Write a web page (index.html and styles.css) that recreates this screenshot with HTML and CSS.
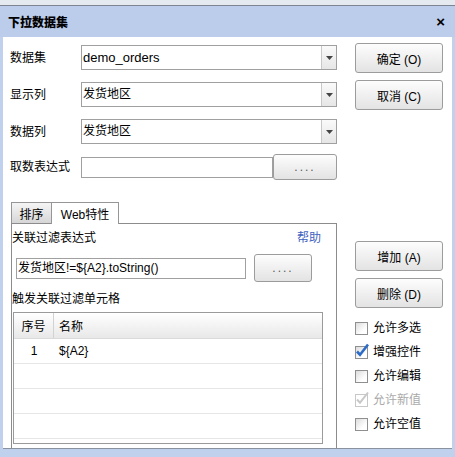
FILE: index.html
```html
<!DOCTYPE HTML>
<html lang="zh-CN">
<head>
    <meta http-equiv="content-type" content="text/html; charset=utf-8">
    <title>下拉数据集</title>
    <link rel="stylesheet" href="styles.css">
</head>
<body>
    <div class="top-strip"></div>
    <div class="titlebar">
        <span class="titlebar__text">下拉数据集</span>
        <span class="titlebar__close">×</span>
    </div>
    <div class="content">
        <div class="main">
            <div class="form">
                <div class="row">
                    <span class="row__label">数据集</span>
                    <div class="combo">
                        <span class="combo__value combo__value--latin">demo_orders</span>
                        <span class="combo__arrow"><svg width="7" height="4" viewBox="0 0 7 4"><path d="M0 0h7L3.5 4z" fill="#444"/></svg></span>
                    </div>
                </div>
                <div class="row">
                    <span class="row__label">显示列</span>
                    <div class="combo">
                        <span class="combo__value">发货地区</span>
                        <span class="combo__arrow"><svg width="7" height="4" viewBox="0 0 7 4"><path d="M0 0h7L3.5 4z" fill="#444"/></svg></span>
                    </div>
                </div>
                <div class="row row--last-combo">
                    <span class="row__label">数据列</span>
                    <div class="combo">
                        <span class="combo__value">发货地区</span>
                        <span class="combo__arrow"><svg width="7" height="4" viewBox="0 0 7 4"><path d="M0 0h7L3.5 4z" fill="#444"/></svg></span>
                    </div>
                </div>
                <div class="row row--expr">
                    <span class="row__label">取数表达式</span>
                    <div class="text-input text-input--expr"></div>
                    <button class="btn btn--dots">....</button>
                </div>
            </div>
            <div class="actions">
                <button class="btn">确定 (O)</button>
                <button class="btn">取消 (C)</button>
            </div>
        </div>

        <div class="lower">
            <div class="tabs-area">
                <div class="tabs">
                    <span class="tab">排序</span>
                    <span class="tab tab--active">Web特性</span>
                </div>
                <div class="panel">
                    <div class="panel__head">
                        <span>关联过滤表达式</span>
                        <span class="link">帮助</span>
                    </div>
                    <div class="filter-row">
                        <div class="text-input text-input--filter">发货地区!=${A2}.toString()</div>
                        <button class="btn btn--dots btn--filter">....</button>
                    </div>
                    <div class="panel__label">触发关联过滤单元格</div>
                    <div class="cells">
                        <div class="cells__head">
                            <span class="cells__no">序号</span>
                            <span class="cells__name">名称</span>
                        </div>
                        <div class="cells__row">
                            <span class="cells__no">1</span>
                            <span class="cells__name">${A2}</span>
                        </div>
                        <div class="cells__row"></div>
                        <div class="cells__row"></div>
                        <div class="cells__row"></div>
                    </div>
                </div>
            </div>

            <div class="side">
                <button class="btn">增加 (A)</button>
                <button class="btn">删除 (D)</button>
                <div class="checks">
                    <div class="check">
                        <span class="check__box"></span>
                        <span>允许多选</span>
                    </div>
                    <div class="check">
                        <span class="check__box"><svg width="16" height="16" viewBox="0 0 16 16"><path d="M3 8.5l3 3.2L14 1.5" fill="none" stroke="#2c6cc6" stroke-width="2.6"/></svg></span>
                        <span>增强控件</span>
                    </div>
                    <div class="check">
                        <span class="check__box"></span>
                        <span>允许编辑</span>
                    </div>
                    <div class="check check--disabled">
                        <span class="check__box"><svg width="16" height="16" viewBox="0 0 16 16"><path d="M3 8.5l3 3.2L14 1.5" fill="none" stroke="#c8c8c8" stroke-width="2"/></svg></span>
                        <span>允许新值</span>
                    </div>
                    <div class="check">
                        <span class="check__box"></span>
                        <span>允许空值</span>
                    </div>
                </div>
            </div>
        </div>
    </div>
</body>
</html>
```

FILE: styles.css
```css
/* Colours */
:root {
    --frame-blue: rgb(192, 209, 238);
    --title-blue: rgb(188, 205, 236);
    --strip: rgb(229, 233, 240);
    --border: rgb(160, 160, 160);
    --panel-border: rgb(140, 140, 140);
    --row-line: rgb(230, 230, 230);
    --link: rgb(64, 99, 192);
    --disabled: rgb(170, 170, 170);
}

* {
    box-sizing: border-box;
}

html, body {
    margin: 0;
    padding: 0;
}

body {
    width: 455px;
    height: 457px;
    overflow: hidden;
    background-color: var(--frame-blue);
    font-family: "Liberation Sans", "Noto Sans CJK SC", sans-serif;
    font-size: 12px;
    color: #000;
}

.top-strip {
    height: 6px;
    background-color: var(--strip);
    border-bottom: 1px solid rgb(125, 133, 146);
}

.titlebar {
    height: 31px;
    display: flex;
    align-items: center;
    justify-content: space-between;
    padding: 0 10px 0 8px;
    background-color: var(--title-blue);
}

.titlebar__text {
    font-weight: 900;
}

.titlebar__close {
    font-weight: bold;
    font-size: 15px;
}

.content {
    margin: 0 3px;
    height: 412px;
    background-color: #fff;
    border-bottom: 1px solid rgb(138, 146, 160);
}

/* Upper form */
.main {
    display: flex;
    height: 165px;
}

.form {
    width: 334px;
    padding: 8px 0 0 7px;
}

.row {
    display: flex;
    align-items: center;
    height: 25px;
    margin-bottom: 12px;
}

.row--last-combo {
    margin-bottom: 10px;
}

.row--expr {
    height: 26px;
}

.row__label {
    width: 71px;
    line-height: 16px;
}

.combo {
    display: flex;
    width: 256px;
    height: 25px;
    border: 1px solid var(--border);
}

.combo__value {
    flex: 1;
    padding-left: 1px;
    line-height: 23px;
}

.combo__value--latin {
    font-size: 13px;
}

.combo__arrow {
    width: 15px;
    display: flex;
    align-items: center;
    justify-content: center;
    border-left: 1px solid rgb(200, 200, 200);
    background: linear-gradient(rgb(250, 250, 250), rgb(230, 230, 230));
}

.text-input {
    height: 21px;
    border: 1px solid var(--border);
    background-color: #fff;
    line-height: 19px;
    white-space: nowrap;
}

.text-input--expr {
    width: 192px;
}

.btn {
    height: 30px;
    padding: 0;
    border: 1px solid rgb(156, 156, 156);
    border-radius: 3px;
    background: linear-gradient(rgb(253, 253, 253), rgb(227, 227, 227));
    font-family: inherit;
    font-size: 12px;
    color: #000;
}

.btn--dots {
    width: 64px;
    height: 26px;
    color: rgb(90, 90, 90);
    letter-spacing: 2px;
}

.actions {
    width: 88px;
    margin: 6px 0 0 18px;
    display: flex;
    flex-direction: column;
    gap: 7px;
}

/* Tabs */
.lower {
    display: flex;
    height: 246px;
}

.tabs-area {
    width: 326px;
    margin-left: 8px;
    display: flex;
    flex-direction: column;
}

.tabs {
    display: flex;
    align-items: flex-start;
    height: 21px;
}

.tab {
    height: 21px;
    width: 41px;
    display: flex;
    align-items: center;
    justify-content: center;
    border: 1px solid rgb(150, 150, 150);
    border-bottom: none;
    background: linear-gradient(rgb(245, 245, 245), rgb(214, 214, 214));
}

.tab--active {
    width: 68px;
    height: 22px;
    margin-left: -1px;
    background: #fff;
    position: relative;
    z-index: 1;
    padding-bottom: 1px;
}

.panel {
    flex: 1;
    border: 1px solid var(--panel-border);
    border-bottom: none;
    padding-right: 15px;
}

.panel__head {
    display: flex;
    justify-content: space-between;
    margin-top: 6px;
    line-height: 16px;
}

.link {
    color: var(--link);
}

.filter-row {
    display: flex;
    align-items: center;
    gap: 8px;
    height: 28px;
    margin: 8px 0 0 4px;
}

.text-input--filter {
    width: 230px;
    padding-left: 1px;
}

.btn--filter {
    width: 58px;
    height: 28px;
}

.panel__label {
    margin-top: 9px;
    line-height: 16px;
}

.cells {
    width: 310px;
    height: 132px;
    margin: 5px 0 0 1px;
    border: 1px solid rgb(154, 154, 154);
    overflow: hidden;
}

.cells__head {
    display: flex;
    height: 26px;
    align-items: stretch;
    border-bottom: 1px solid rgb(218, 218, 218);
    background: linear-gradient(#fff, rgb(232, 232, 232));
}

.cells__head .cells__no {
    border-right: 1px solid rgb(210, 210, 210);
}

.cells__row {
    display: flex;
    height: 25px;
    border-bottom: 1px solid var(--row-line);
}

.cells__no {
    width: 40px;
    display: flex;
    align-items: center;
    justify-content: center;
}

.cells__name {
    display: flex;
    align-items: center;
    padding-left: 5px;
}

/* Right side */
.side {
    width: 88px;
    margin: 39px 0 0 18px;
    display: flex;
    flex-direction: column;
    gap: 7px;
}

.checks {
    margin-top: 1px;
}

.check {
    display: flex;
    align-items: center;
    gap: 5px;
    height: 24px;
    line-height: 16px;
}

.check__box {
    flex: none;
    width: 13px;
    height: 13px;
    border: 1px solid rgb(142, 143, 143);
    background: linear-gradient(135deg, rgb(220, 220, 220), #fff 70%);
    display: flex;
    align-items: center;
    justify-content: center;
    overflow: visible;
}

.check__box svg {
    flex: none;
    margin-top: -2px;
}

.check--disabled {
    color: var(--disabled);
}

.check--disabled .check__box {
    border-color: rgb(200, 200, 200);
    background: #fff;
}
```
